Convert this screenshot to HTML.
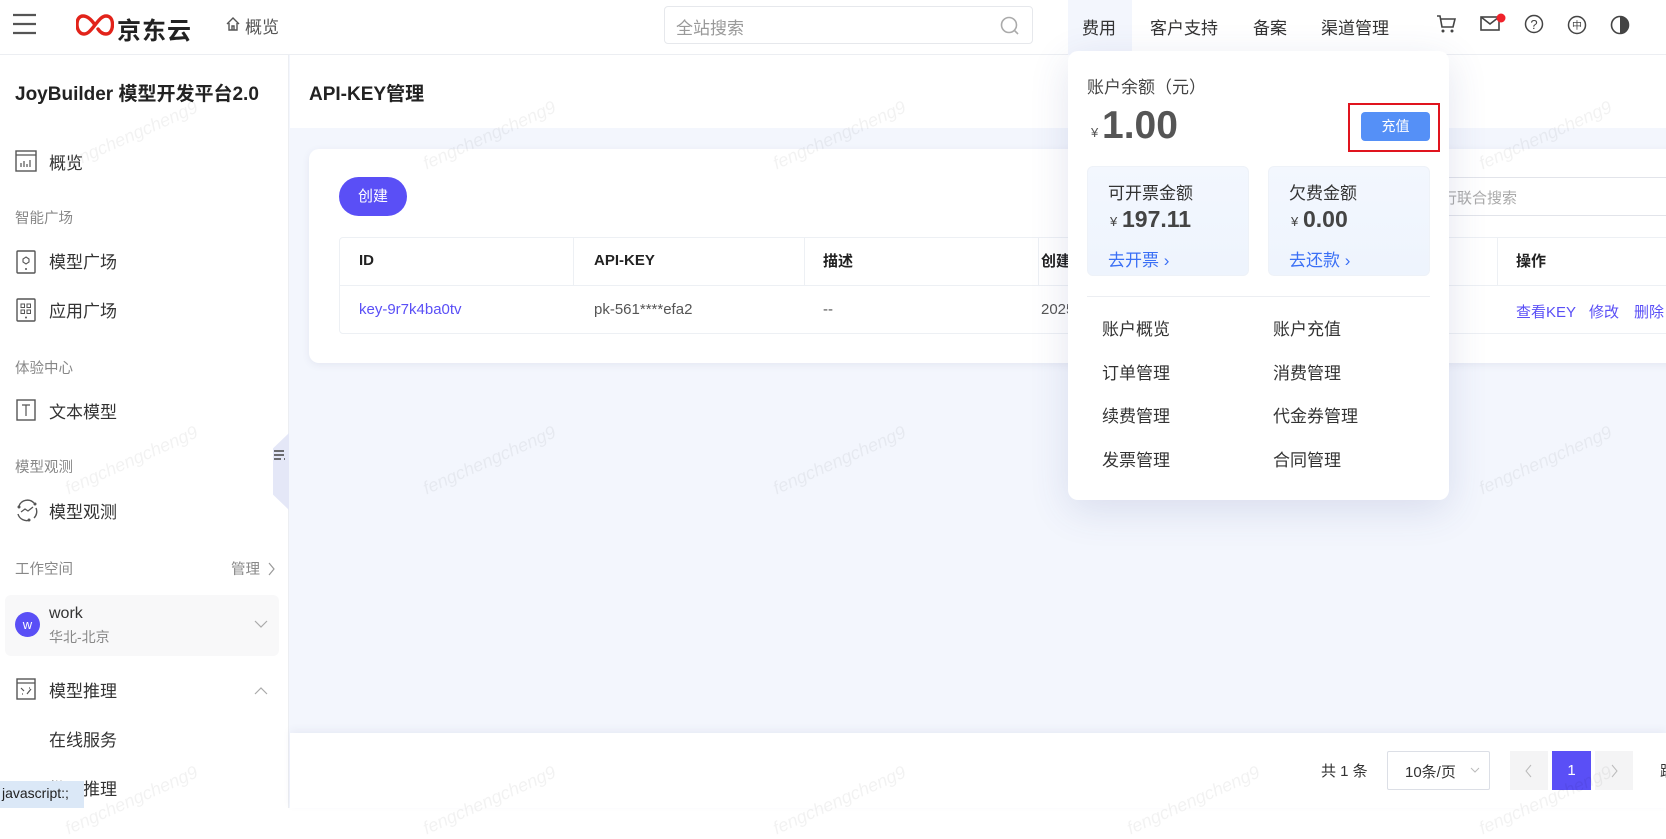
<!DOCTYPE html>
<html style="background:#fff"><head><meta charset="utf-8">
<style>
*{margin:0;padding:0;box-sizing:border-box}
body{width:1666px;height:808px;overflow:hidden;position:relative;background:#f3f6fd;font-family:"Liberation Sans","Noto Sans CJK SC",sans-serif;color:#333}
.a{position:absolute;white-space:nowrap}
.hdr{left:0;top:0;width:1666px;height:55px;background:#fff;border-bottom:1px solid #eceef2}
.side{left:0;top:55px;width:289px;height:753px;background:#fff;border-right:1px solid #eceef2}
.nav{font-size:17px;color:#333}
.sec{font-size:14.5px;color:#888}
.wm{position:absolute;font-size:18px;color:rgba(0,0,0,0.05);transform:rotate(-24deg);white-space:nowrap;font-style:italic}
.th{font-size:15px;font-weight:bold;color:#222;top:252px}
.td{font-size:15px;color:#555;top:301px}
.mi{font-size:17px;color:#333}
</style></head><body>
<!-- header -->
<div class="a hdr"></div>
<svg class="a" style="left:13px;top:13px" width="24" height="22"><path d="M0 2h23M0 11h23M0 20h23" stroke="#555" stroke-width="2.2"/></svg>
<svg class="a" style="left:76px;top:13px" width="38" height="24" viewBox="0 0 38 24"><path d="M19 12c-4-6-8-9-12-9-3.5 0-6 3-6 8.5S4 21 8 21c4 0 7-4 11-9s7-9 11-9 6.5 3 6.5 8.5-2.5 9.5-6.5 9.5c-3.5 0-6-2-8-5" fill="none" stroke="#e2231a" stroke-width="3.4" stroke-linecap="round"/></svg>
<div class="a" style="left:117px;top:11px;font-size:24px;font-weight:bold;color:#222;letter-spacing:1px">京东云</div>
<svg class="a" style="left:225px;top:16px" width="16" height="16" viewBox="0 0 16 16"><path d="M2 8L8 2l6 6M4 7v7h8V7M7 14v-4h2v4" fill="none" stroke="#555" stroke-width="1.4"/></svg>
<div class="a" style="left:245px;top:13px;font-size:17px;color:#555">概览</div>
<div class="a" style="left:664px;top:6px;width:369px;height:38px;border:1px solid #e6e8ec;border-radius:4px"></div>
<div class="a" style="left:676px;top:14px;font-size:17px;color:#999">全站搜索</div>
<svg class="a" style="left:1000px;top:16px" width="20" height="20"><circle cx="9" cy="9" r="7.5" fill="none" stroke="#aaa" stroke-width="1.6"/><path d="M14 14l4 4" stroke="#aaa" stroke-width="1.6"/></svg>
<div class="a" style="left:1068px;top:0;width:64px;height:55px;background:#f3f6fd"></div>
<div class="a nav" style="left:1082px;top:14px">费用</div>
<div class="a nav" style="left:1150px;top:14px">客户支持</div>
<div class="a nav" style="left:1253px;top:14px">备案</div>
<div class="a nav" style="left:1321px;top:14px">渠道管理</div>
<svg class="a" style="left:1436px;top:14px" width="20" height="20" viewBox="0 0 20 20"><path d="M1 2h3l2 11h11l2-8H5" fill="none" stroke="#444" stroke-width="1.6"/><circle cx="7" cy="17" r="1.5" fill="#444"/><circle cx="16" cy="17" r="1.5" fill="#444"/></svg>
<svg class="a" style="left:1480px;top:13px" width="26" height="20" viewBox="0 0 26 20"><rect x="1" y="4" width="18" height="13" fill="none" stroke="#444" stroke-width="1.6"/><path d="M1 4l9 7 9-7" fill="none" stroke="#444" stroke-width="1.6"/><circle cx="21" cy="5" r="4.5" fill="#f0222a"/></svg>
<svg class="a" style="left:1524px;top:14px" width="20" height="20"><circle cx="10" cy="10" r="8.5" fill="none" stroke="#444" stroke-width="1.5"/><text x="10" y="15" font-size="13" text-anchor="middle" fill="#444" font-family="Liberation Sans">?</text></svg>
<svg class="a" style="left:1567px;top:15px" width="20" height="20"><circle cx="10" cy="10" r="8.5" fill="none" stroke="#444" stroke-width="1.5"/><text x="10" y="14" font-size="10" text-anchor="middle" fill="#444" font-family="Noto Sans CJK SC">中</text></svg>
<svg class="a" style="left:1610px;top:15px" width="20" height="20"><circle cx="10" cy="10" r="8.5" fill="none" stroke="#444" stroke-width="1.6"/><path d="M10 1.5a8.5 8.5 0 0 1 0 17z" fill="#444"/></svg>

<!-- sidebar -->
<div class="a side"></div>
<div class="a" style="left:15px;top:79px;font-size:19px;font-weight:bold;color:#222">JoyBuilder 模型开发平台2.0</div>
<svg class="a" style="left:15px;top:150px" width="22" height="22"><rect x="1" y="1" width="20" height="20" fill="none" stroke="#555" stroke-width="1.4"/><path d="M1 5h20M6 17v-4M9 17v-6M12 17v-3M15 17v-7" stroke="#555" stroke-width="1.2"/></svg>
<div class="a nav" style="left:49px;top:149px">概览</div>
<div class="a sec" style="left:15px;top:207px">智能广场</div>
<svg class="a" style="left:16px;top:250px" width="20" height="24"><rect x="1" y="1" width="18" height="22" rx="1" fill="none" stroke="#555" stroke-width="1.4"/><path d="M10 7l3 2v3l-3 2-3-2V9z" fill="none" stroke="#555" stroke-width="1.1"/><circle cx="10" cy="19" r="1" fill="#555"/></svg>
<div class="a nav" style="left:49px;top:248px">模型广场</div>
<svg class="a" style="left:16px;top:298px" width="20" height="24"><rect x="1" y="1" width="18" height="22" rx="1" fill="none" stroke="#555" stroke-width="1.4"/><rect x="5" y="6" width="3.5" height="3.5" fill="none" stroke="#555"/><rect x="11" y="6" width="3.5" height="3.5" fill="none" stroke="#555"/><rect x="5" y="12" width="3.5" height="3.5" fill="none" stroke="#555"/><rect x="11" y="12" width="3.5" height="3.5" fill="none" stroke="#555"/><circle cx="10" cy="19.5" r="1" fill="#555"/></svg>
<div class="a nav" style="left:49px;top:297px">应用广场</div>
<div class="a sec" style="left:15px;top:357px">体验中心</div>
<svg class="a" style="left:16px;top:399px" width="20" height="22"><rect x="1" y="1" width="18" height="20" fill="none" stroke="#555" stroke-width="1.4"/><path d="M6 6h8M10 6v11" stroke="#555" stroke-width="1.2"/></svg>
<div class="a nav" style="left:49px;top:398px">文本模型</div>
<div class="a sec" style="left:15px;top:456px">模型观测</div>
<svg class="a" style="left:15px;top:498px" width="24" height="24" viewBox="0 0 24 24"><path d="M4 8a9 9 0 0 1 15-3M21 10a9 9 0 0 1-2 10M15 22a9 9 0 0 1-12-6" fill="none" stroke="#555" stroke-width="1.4"/><path d="M6 14l4-3 3 2 5-4" fill="none" stroke="#555" stroke-width="1.3"/><circle cx="4" cy="9" r="1.5" fill="#555"/><circle cx="20" cy="6" r="1.5" fill="#555"/><circle cx="14" cy="22" r="1.5" fill="#555"/></svg>
<div class="a nav" style="left:49px;top:498px">模型观测</div>
<div class="a sec" style="left:15px;top:558px">工作空间</div>
<div class="a sec" style="left:231px;top:558px">管理</div>
<svg class="a" style="left:268px;top:562px" width="8" height="14"><path d="M1 1l5 6-5 6" fill="none" stroke="#999" stroke-width="1.2"/></svg>
<div class="a" style="left:5px;top:595px;width:274px;height:61px;background:#f8f8f9;border-radius:6px"></div>
<div class="a" style="left:15px;top:612px;width:25px;height:25px;border-radius:50%;background:#5a4ff6;color:#fff;font-size:13px;text-align:center;line-height:25px">w</div>
<div class="a" style="left:49px;top:605px;font-size:16px;color:#333">work</div>
<div class="a" style="left:49px;top:627px;font-size:14px;color:#888">华北-北京</div>
<svg class="a" style="left:254px;top:620px" width="14" height="9"><path d="M1 1l6 6 6-6" fill="none" stroke="#aaa" stroke-width="1.2"/></svg>
<svg class="a" style="left:16px;top:678px" width="20" height="22"><rect x="1" y="1" width="18" height="20" fill="none" stroke="#555" stroke-width="1.4"/><path d="M1 5h18M5 10l3 3M11 16l4-5M6 16h1M13 10h1" stroke="#555" stroke-width="1.2"/></svg>
<div class="a nav" style="left:49px;top:677px">模型推理</div>
<svg class="a" style="left:254px;top:686px" width="14" height="9"><path d="M1 8l6-6 6 6" fill="none" stroke="#aaa" stroke-width="1.2"/></svg>
<div class="a nav" style="left:49px;top:726px">在线服务</div>
<div class="a nav" style="left:49px;top:775px">批量推理</div>
<div class="a" style="left:273px;top:433px;width:16px;height:77px;background:#e4e7f7;clip-path:polygon(100% 0,100% 100%,0 80%,0 20%)"></div>
<svg class="a" style="left:274px;top:449px" width="12" height="14"><path d="M0 2h10M0 6h10M0 10h7M10 10h1" stroke="#444" stroke-width="1.5"/></svg>
<div class="a" style="left:0;top:781px;width:84px;height:27px;background:#dbe8f7;font-size:14px;color:#222;padding:4px 2px">javascript:;</div>

<!-- main -->
<div class="a" style="left:290px;top:55px;width:1376px;height:73px;background:#fff"></div>
<div class="a" style="left:309px;top:79px;font-size:19px;font-weight:bold;color:#222">API-KEY管理</div>
<div class="a" style="left:309px;top:149px;width:1380px;height:214px;background:#fff;border-radius:10px;box-shadow:0 2px 8px rgba(60,70,120,0.08)"></div>
<div class="a" style="left:339px;top:177px;width:68px;height:39px;border-radius:20px;background:#5a4ff6;color:#fff;font-size:15px;text-align:center;line-height:39px">创建</div>
<div class="a" style="left:1440px;top:177px;width:240px;height:39px;border:1px solid #e2e4ea;border-radius:4px"></div>
<div class="a" style="left:1352px;top:187px;font-size:15px;color:#aaa">请输入条件进行联合搜索</div>
<div class="a" style="left:339px;top:237px;width:1340px;height:97px;border:1px solid #edf0f4;border-radius:4px"></div>
<div class="a" style="left:339px;top:285px;width:1340px;height:1px;background:#edf0f4"></div>
<div class="a" style="left:573px;top:237px;width:1px;height:48px;background:#edf0f4"></div>
<div class="a" style="left:804px;top:237px;width:1px;height:48px;background:#edf0f4"></div>
<div class="a" style="left:1038px;top:237px;width:1px;height:48px;background:#edf0f4"></div>
<div class="a" style="left:1497px;top:237px;width:1px;height:48px;background:#edf0f4"></div>
<div class="a th" style="left:359px">ID</div>
<div class="a th" style="left:594px">API-KEY</div>
<div class="a th" style="left:823px;top:250px">描述</div>
<div class="a th" style="left:1041px;top:250px">创建时间</div>
<div class="a th" style="left:1516px;top:250px">操作</div>
<div class="a td" style="left:359px;color:#5a4ff6">key-9r7k4ba0tv</div>
<div class="a td" style="left:594px">pk-561****efa2</div>
<div class="a td" style="left:823px">--</div>
<div class="a td" style="left:1041px">2025-01-01</div>
<div class="a td" style="left:1516px;color:#5a4ff6">查看KEY</div>
<div class="a td" style="left:1589px;color:#5a4ff6">修改</div>
<div class="a td" style="left:1634px;color:#5a4ff6">删除</div>

<!-- footer -->
<div class="a" style="left:290px;top:733px;width:1376px;height:75px;background:#fff;box-shadow:0 -3px 8px rgba(60,70,120,0.06)"></div>
<div class="a" style="left:1321px;top:760px;font-size:15px;color:#333">共 1 条</div>
<div class="a" style="left:1387px;top:751px;width:103px;height:39px;border:1px solid #dcdfe6;border-radius:2px"></div>
<div class="a" style="left:1405px;top:761px;font-size:15px;color:#333">10条/页</div>
<svg class="a" style="left:1470px;top:767px" width="10" height="7"><path d="M1 1l4 4 4-4" fill="none" stroke="#bbb"/></svg>
<div class="a" style="left:1510px;top:751px;width:38px;height:39px;background:#f4f4f5"></div>
<svg class="a" style="left:1525px;top:764px" width="8" height="14"><path d="M6 1L1 7l5 6" fill="none" stroke="#bbb"/></svg>
<div class="a" style="left:1552px;top:751px;width:39px;height:39px;background:#5a4ff6;color:#fff;font-size:15px;text-align:center;line-height:39px">1</div>
<div class="a" style="left:1595px;top:751px;width:38px;height:39px;background:#f4f4f5"></div>
<svg class="a" style="left:1611px;top:764px" width="8" height="14"><path d="M1 1l5 6-5 6" fill="none" stroke="#bbb"/></svg>
<div class="a" style="left:1660px;top:760px;font-size:15px;color:#333">跳</div>

<!-- watermarks -->
<div class="wm" style="left:60px;top:125px">fengchengcheng9</div>
<div class="wm" style="left:418px;top:125px">fengchengcheng9</div>
<div class="wm" style="left:768px;top:125px">fengchengcheng9</div>
<div class="wm" style="left:1122px;top:125px">fengchengcheng9</div>
<div class="wm" style="left:1474px;top:125px">fengchengcheng9</div>
<div class="wm" style="left:60px;top:450px">fengchengcheng9</div>
<div class="wm" style="left:418px;top:450px">fengchengcheng9</div>
<div class="wm" style="left:768px;top:450px">fengchengcheng9</div>
<div class="wm" style="left:1122px;top:450px">fengchengcheng9</div>
<div class="wm" style="left:1474px;top:450px">fengchengcheng9</div>
<div class="wm" style="left:60px;top:790px">fengchengcheng9</div>
<div class="wm" style="left:418px;top:790px">fengchengcheng9</div>
<div class="wm" style="left:768px;top:790px">fengchengcheng9</div>
<div class="wm" style="left:1122px;top:790px">fengchengcheng9</div>
<div class="wm" style="left:1474px;top:790px">fengchengcheng9</div>

<!-- dropdown -->
<div class="a" style="left:1068px;top:51px;width:381px;height:449px;background:#fff;border-radius:10px;box-shadow:0 10px 40px rgba(60,70,140,0.14)"></div>
<div class="a" style="left:1087px;top:73px;font-size:17px;color:#444">账户余额（元）</div>
<div class="a" style="left:1091px;top:125px;font-size:13px;color:#555">¥</div>
<div class="a" style="left:1102px;top:104px;font-size:39px;font-weight:bold;color:#555">1.00</div>
<div class="a" style="left:1348px;top:103px;width:92px;height:49px;border:2px solid #e0141e"></div>
<div class="a" style="left:1361px;top:112px;width:69px;height:29px;background:#5590f7;border-radius:4px;color:#fff;font-size:14px;text-align:center;line-height:29px">充值</div>
<div class="a" style="left:1087px;top:166px;width:162px;height:110px;border-radius:6px;background:linear-gradient(180deg,#f3f7fe,#eef4fd);border:1px solid #eef2f8"></div>
<div class="a" style="left:1268px;top:166px;width:162px;height:110px;border-radius:6px;background:linear-gradient(180deg,#f3f7fe,#eef4fd);border:1px solid #eef2f8"></div>
<div class="a" style="left:1108px;top:179px;font-size:17px;color:#333">可开票金额</div>
<div class="a" style="left:1110px;top:214px;font-size:13px;color:#444">¥</div>
<div class="a" style="left:1122px;top:206px;font-size:23px;font-weight:bold;color:#444">197.11</div>
<div class="a" style="left:1108px;top:246px;font-size:17px;color:#3a6ff5">去开票 ›</div>
<div class="a" style="left:1289px;top:179px;font-size:17px;color:#333">欠费金额</div>
<div class="a" style="left:1291px;top:214px;font-size:13px;color:#444">¥</div>
<div class="a" style="left:1303px;top:206px;font-size:23px;font-weight:bold;color:#444">0.00</div>
<div class="a" style="left:1289px;top:246px;font-size:17px;color:#3a6ff5">去还款 ›</div>
<div class="a" style="left:1087px;top:296px;width:343px;height:1px;background:#eceef2"></div>
<div class="a mi" style="left:1102px;top:315px">账户概览</div>
<div class="a mi" style="left:1273px;top:315px">账户充值</div>
<div class="a mi" style="left:1102px;top:359px">订单管理</div>
<div class="a mi" style="left:1273px;top:359px">消费管理</div>
<div class="a mi" style="left:1102px;top:402px">续费管理</div>
<div class="a mi" style="left:1273px;top:402px">代金券管理</div>
<div class="a mi" style="left:1102px;top:446px">发票管理</div>
<div class="a mi" style="left:1273px;top:446px">合同管理</div>
</body></html>
